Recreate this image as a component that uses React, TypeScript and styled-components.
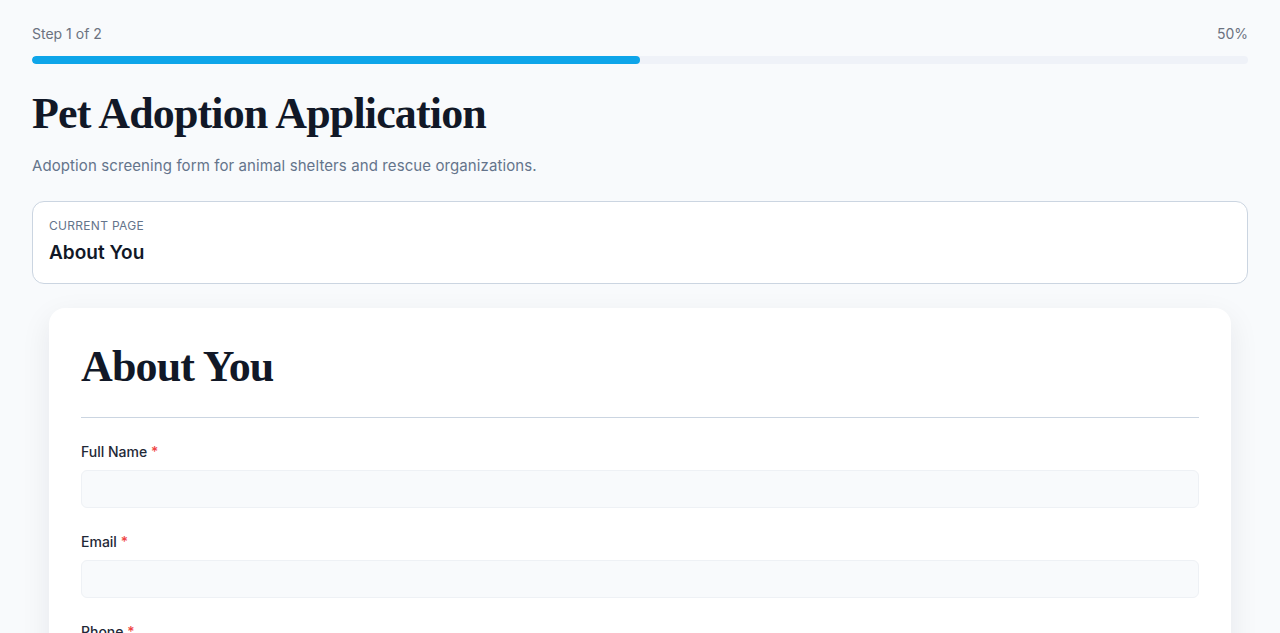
import React from "react";
import styled, { createGlobalStyle } from "styled-components";

const GlobalStyle = createGlobalStyle`
    body {
        margin: 0;
        background: #f8fafc;
        font-family: Inter, "Noto Sans", sans-serif;
        color: #0f172a;
    }
    * { box-sizing: border-box; }
`;

const fields = [
    { label: "Full Name", type: "text" },
    { label: "Email", type: "email" },
    { label: "Phone", type: "tel" },
];

export default function App() {
    const step = 1;
    const total = 2;
    const percent = Math.round((step / total) * 100);

    return (
        <Page>
            <GlobalStyle />
            <ProgressHead>
                <span>
                    Step {step} of {total}
                </span>
                <span>{percent}%</span>
            </ProgressHead>
            <Track>
                <Fill style={{ width: `${percent}%` }} />
            </Track>

            <Title>Pet Adoption Application</Title>
            <Subtitle>
                Adoption screening form for animal shelters and rescue
                organizations.
            </Subtitle>

            <CurrentCard>
                <Eyebrow>Current Page</Eyebrow>
                <CurrentName>About You</CurrentName>
            </CurrentCard>

            <FormCard>
                <SectionTitle>About You</SectionTitle>
                <Divider />
                {fields.map((f) => (
                    <Field key={f.label}>
                        <Label>
                            {f.label} <Required>*</Required>
                        </Label>
                        <Input type={f.type} />
                    </Field>
                ))}
            </FormCard>
        </Page>
    );
}

const Page = styled.main`
    padding: 25px 32px 32px;
    display: flex;
    flex-direction: column;
`;

const ProgressHead = styled.div`
    display: flex;
    justify-content: space-between;
    font-size: 14px;
    line-height: 18px;
    color: #6b7280;
`;

const Track = styled.div`
    margin-top: 13px;
    height: 8px;
    border-radius: 999px;
    background: #eff2f8;
    overflow: hidden;
`;

const Fill = styled.div`
    height: 100%;
    border-radius: 999px;
    background: #0ea5e9;
`;

const Title = styled.h1`
    margin: 24px 0 0;
    font-family: "Liberation Serif", "DejaVu Serif", serif;
    font-weight: 700;
    font-size: 44px;
    line-height: 52px;
    letter-spacing: -0.85px;
    color: #111827;
`;

const Subtitle = styled.p`
    margin: 14px 0 0;
    font-size: 15px;
    line-height: 24px;
    letter-spacing: 0.1px;
    color: #64748b;
`;

const CurrentCard = styled.section`
    margin-top: 23px;
    padding: 16px 16px 17px;
    background: #ffffff;
    border: 1px solid #cbd5e1;
    border-radius: 12px;
    display: flex;
    flex-direction: column;
    gap: 6px;
`;

const Eyebrow = styled.div`
    font-size: 12px;
    line-height: 16px;
    letter-spacing: 0.3px;
    text-transform: uppercase;
    color: #64748b;
`;

const CurrentName = styled.div`
    font-size: 19px;
    line-height: 26px;
    font-weight: 600;
    color: #111827;
`;

const FormCard = styled.section`
    margin: 24px 17px 0;
    padding: 29px 32px 32px;
    background: #ffffff;
    border-radius: 16px;
    box-shadow: 0 10px 30px rgba(15, 23, 42, 0.08);
`;

const SectionTitle = styled.h2`
    margin: 0;
    font-family: "Liberation Serif", "DejaVu Serif", serif;
    font-weight: 700;
    font-size: 44px;
    line-height: 60px;
    letter-spacing: -0.85px;
    color: #111827;
`;

const Divider = styled.hr`
    margin: 20px 0 24px;
    border: 0;
    border-top: 1px solid #cbd5e1;
`;

const Field = styled.div`
    display: flex;
    flex-direction: column;
    gap: 8px;
    margin-bottom: 24px;
`;

const Label = styled.label`
    font-size: 14px;
    line-height: 20px;
    font-weight: 500;
    color: #1f2937;
`;

const Required = styled.span`
    color: #ef4444;
`;

const Input = styled.input`
    height: 38px;
    width: 100%;
    border: 1px solid #eef1f5;
    border-radius: 6px;
    background: #f8fafc;
    padding: 0 12px;
    font: inherit;
`;
